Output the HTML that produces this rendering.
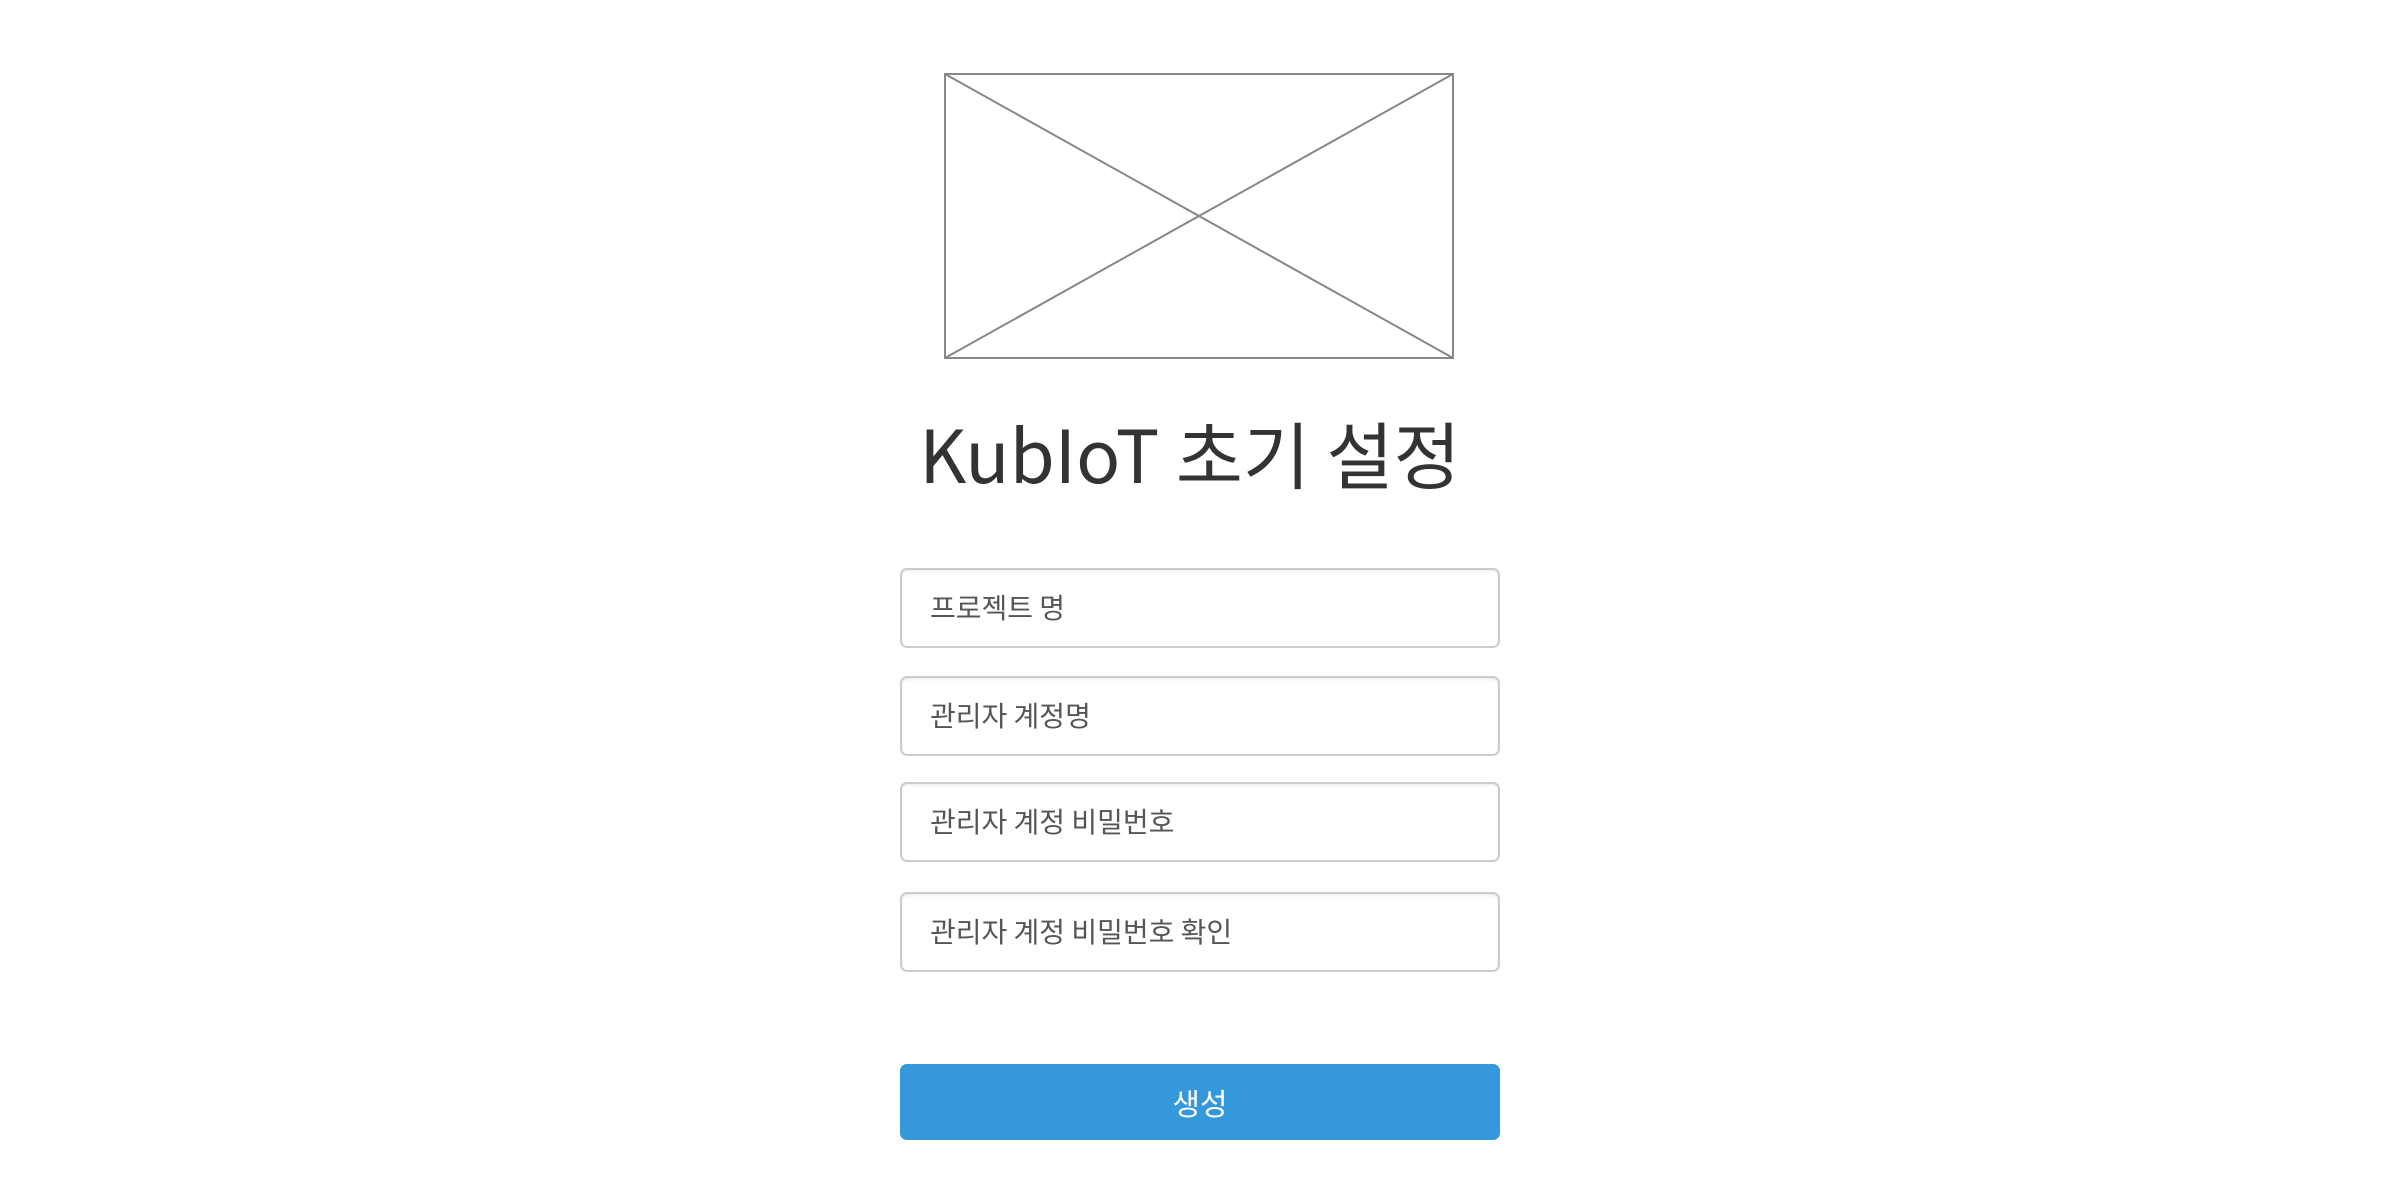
<!DOCTYPE html>
<html><head><meta charset="utf-8"><style>
html,body{margin:0;padding:0;background:#fff;width:2400px;height:1200px;overflow:hidden;font-family:"Liberation Sans","Noto Sans CJK KR",sans-serif;}
.ph{position:absolute;left:944px;top:73px;width:510px;height:286px;}
h1{position:absolute;left:0;width:2380px;top:392px;margin:0;text-align:center;font-weight:400;font-size:73px;line-height:120px;color:#333;font-family:"Noto Sans CJK KR",sans-serif;}
.in{position:absolute;left:900px;height:76px;border:2px solid #ccc;border-radius:7px;box-shadow:inset 0 2px 2px rgba(0,0,0,0.06);font-family:"Noto Sans CJK KR",sans-serif;font-size:28px;color:#555;line-height:74px;padding-left:28px;box-sizing:content-box;width:568px;}
.btn{position:absolute;left:900px;top:1064px;width:600px;height:76px;background:#3598db;border-radius:7px;color:#fff;text-align:center;font-family:"Noto Sans CJK KR",sans-serif;font-size:30px;line-height:76px;}
</style></head><body>
<svg class="ph" viewBox="0 0 510 286" width="510" height="286">
<rect x="1" y="1" width="508" height="284" fill="none" stroke="#888" stroke-width="2"/>
<line x1="1" y1="1" x2="509" y2="285" stroke="#888" stroke-width="2"/>
<line x1="509" y1="1" x2="1" y2="285" stroke="#888" stroke-width="2"/>
</svg>
<h1>KubIoT 초기 설정</h1>
<div class="in" style="top:568px">프로젝트 명</div>
<div class="in" style="top:676px">관리자 계정명</div>
<div class="in" style="top:782px">관리자 계정 비밀번호</div>
<div class="in" style="top:892px">관리자 계정 비밀번호 확인</div>
<div class="btn">생성</div>
</body></html>
